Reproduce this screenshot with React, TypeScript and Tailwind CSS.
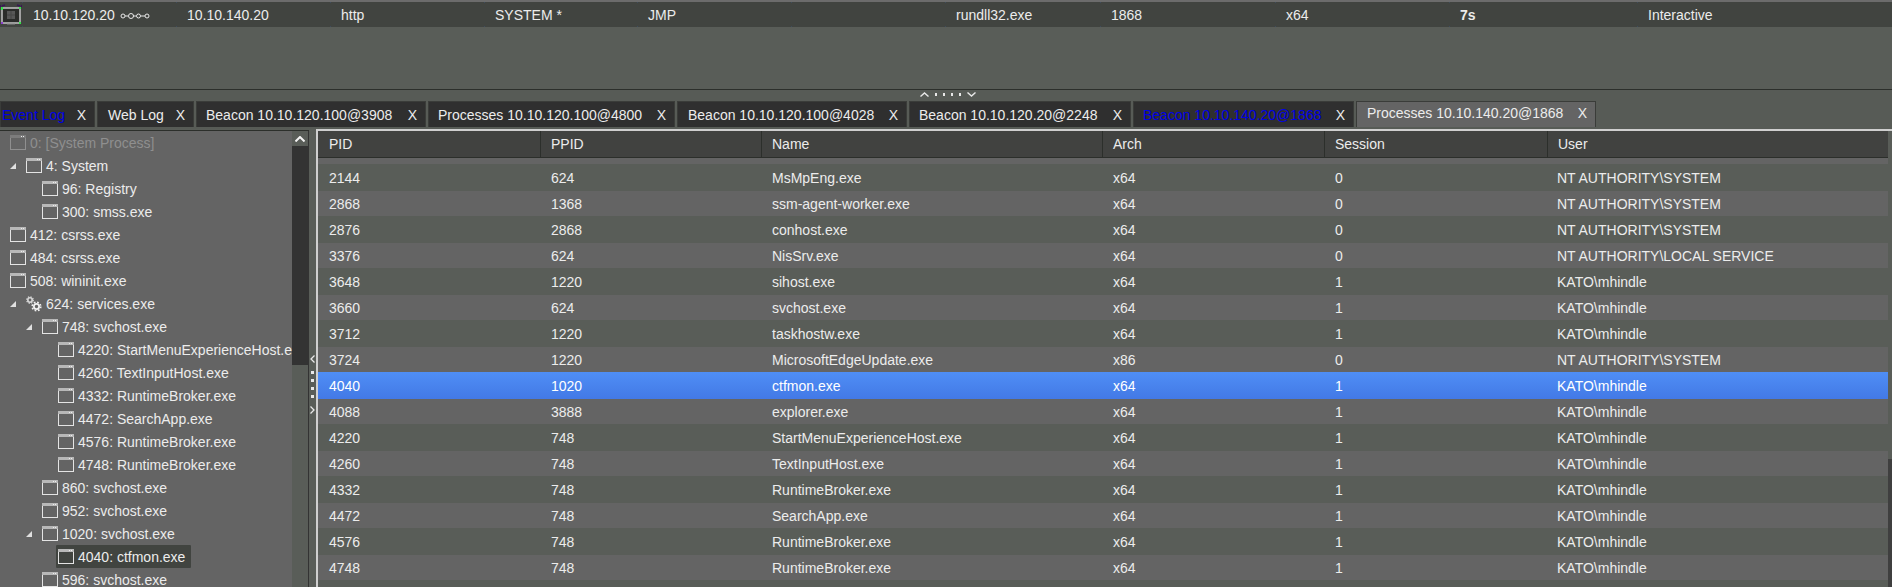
import React from "react";

const topCells: { w: string; text: string; bold?: boolean; pivot?: boolean }[] = [
  { w: "w-[154px]", text: "10.10.120.20", pivot: true },
  { w: "w-[154px]", text: "10.10.140.20" },
  { w: "w-[154px]", text: "http" },
  { w: "w-[153px]", text: "SYSTEM *" },
  { w: "w-[154px]", text: "JMP" },
  { w: "w-[154px]", text: "" },
  { w: "w-[155px]", text: "rundll32.exe" },
  { w: "w-[175px]", text: "1868" },
  { w: "w-[174px]", text: "x64" },
  { w: "w-[188px]", text: "7s", bold: true },
  { w: "w-[255px]", text: "Interactive" },
];

const tabs: { label: string; w: string; pad: string; blue?: boolean; active?: boolean }[] = [
  { label: "Event Log", w: "w-[95px]", pad: "pl-[1px]", blue: true },
  { label: "Web Log", w: "w-[97px]", pad: "pl-[10px]" },
  { label: "Beacon 10.10.120.100@3908", w: "w-[230px]", pad: "pl-[9px]" },
  { label: "Processes 10.10.120.100@4800", w: "w-[247px]", pad: "pl-[9px]" },
  { label: "Beacon 10.10.120.100@4028", w: "w-[230px]", pad: "pl-[10px]" },
  { label: "Beacon 10.10.120.20@2248", w: "w-[222px]", pad: "pl-[9px]" },
  { label: "Beacon 10.10.140.20@1868", w: "w-[221px]", pad: "pl-[9px]", blue: true },
  { label: "Processes 10.10.140.20@1868", w: "w-[240px]", pad: "pl-[10px]", active: true },
];

type Node = { t: string; l: 0 | 1 | 2 | 3; exp?: boolean; gear?: boolean; dim?: boolean; sel?: boolean };
const tree: Node[] = [
  { t: "0: [System Process]", l: 0, dim: true },
  { t: "4: System", l: 1, exp: true },
  { t: "96: Registry", l: 2 },
  { t: "300: smss.exe", l: 2 },
  { t: "412: csrss.exe", l: 0 },
  { t: "484: csrss.exe", l: 0 },
  { t: "508: wininit.exe", l: 0 },
  { t: "624: services.exe", l: 1, exp: true, gear: true },
  { t: "748: svchost.exe", l: 2, exp: true },
  { t: "4220: StartMenuExperienceHost.exe", l: 3 },
  { t: "4260: TextInputHost.exe", l: 3 },
  { t: "4332: RuntimeBroker.exe", l: 3 },
  { t: "4472: SearchApp.exe", l: 3 },
  { t: "4576: RuntimeBroker.exe", l: 3 },
  { t: "4748: RuntimeBroker.exe", l: 3 },
  { t: "860: svchost.exe", l: 2 },
  { t: "952: svchost.exe", l: 2 },
  { t: "1020: svchost.exe", l: 2, exp: true },
  { t: "4040: ctfmon.exe", l: 3, sel: true },
  { t: "596: svchost.exe", l: 2 },
];

const rows: string[][] = [
  ["2144", "624", "MsMpEng.exe", "x64", "0", "NT AUTHORITY\\SYSTEM"],
  ["2868", "1368", "ssm-agent-worker.exe", "x64", "0", "NT AUTHORITY\\SYSTEM"],
  ["2876", "2868", "conhost.exe", "x64", "0", "NT AUTHORITY\\SYSTEM"],
  ["3376", "624", "NisSrv.exe", "x64", "0", "NT AUTHORITY\\LOCAL SERVICE"],
  ["3648", "1220", "sihost.exe", "x64", "1", "KATO\\mhindle"],
  ["3660", "624", "svchost.exe", "x64", "1", "KATO\\mhindle"],
  ["3712", "1220", "taskhostw.exe", "x64", "1", "KATO\\mhindle"],
  ["3724", "1220", "MicrosoftEdgeUpdate.exe", "x86", "0", "NT AUTHORITY\\SYSTEM"],
  ["4040", "1020", "ctfmon.exe", "x64", "1", "KATO\\mhindle"],
  ["4088", "3888", "explorer.exe", "x64", "1", "KATO\\mhindle"],
  ["4220", "748", "StartMenuExperienceHost.exe", "x64", "1", "KATO\\mhindle"],
  ["4260", "748", "TextInputHost.exe", "x64", "1", "KATO\\mhindle"],
  ["4332", "748", "RuntimeBroker.exe", "x64", "1", "KATO\\mhindle"],
  ["4472", "748", "SearchApp.exe", "x64", "1", "KATO\\mhindle"],
  ["4576", "748", "RuntimeBroker.exe", "x64", "1", "KATO\\mhindle"],
  ["4748", "748", "RuntimeBroker.exe", "x64", "1", "KATO\\mhindle"],
  ["", "", "", "", "", ""],
];

const headers = ["PID", "PPID", "Name", "Arch", "Session", "User"];
const gridCols = "grid grid-cols-[222px_221px_341px_222px_223px_341px]";

function BeaconIcon() {
  return (
    <svg width="22" height="25" viewBox="0 0 22 25" className="shrink-0">
      <rect x="2" y="6" width="18" height="15" fill="#2b2c2a" stroke="#bcbcbc" strokeWidth="1.6" />
      <rect x="7" y="9" width="8" height="8" fill="#575757" />
      <path d="M11 9v8M7 13h8" stroke="#474747" />
      <path d="M7 22h8" stroke="#8a8a8a" />
      <path d="M1 5l-1-2M21 5l1-2M2 4l3-1M20 4l-3-1" stroke="#3a1656" strokeWidth="1.5" />
      <rect x="1" y="5" width="2" height="3" fill="#35e04a" />
      <rect x="19" y="5" width="2" height="2" fill="#35e04a" />
      <rect x="1" y="20" width="2" height="2" fill="#8d3fd0" />
      <rect x="19" y="20" width="2" height="2" fill="#35e04a" />
    </svg>
  );
}

function PivotIcon() {
  return (
    <svg width="30" height="8" viewBox="0 0 30 8" className="ml-[5px] mt-[2px] shrink-0" fill="none" stroke="#e8e8e8">
      <path d="M5 4h3M13 4h3M21 4h4" />
      <circle cx="3" cy="4" r="2" />
      <circle cx="11" cy="4" r="2.5" />
      <circle cx="18.5" cy="4" r="2" />
      <circle cx="27" cy="4" r="2" />
    </svg>
  );
}

function WindowIcon({ dim, sel }: { dim?: boolean; sel?: boolean }) {
  const line = dim ? "#8f8f8f" : "#e4e4e4";
  return (
    <svg width="16" height="15" viewBox="0 0 16 15" className="shrink-0">
      <rect x="0.5" y="0.5" width="15" height="14" fill={sel ? "#414440" : "none"} stroke={line} />
      <rect x="0" y="0" width="16" height="3" fill={dim ? "#7c7c7c" : "#b8b8b8"} />
      <rect x="11" y="1" width="1" height="1" fill="#eeeeee" />
      <rect x="13" y="1" width="1" height="1" fill="#eeeeee" />
    </svg>
  );
}

function GearIcon() {
  return (
    <svg width="16" height="16" viewBox="0 0 16 16" className="shrink-0" fill="none" stroke="#d8d8d8">
      <circle cx="4" cy="4" r="2.2" strokeWidth="1.6" />
      <circle cx="4" cy="4" r="3.3" strokeWidth="1.2" strokeDasharray="1.3 1.3" />
      <circle cx="10.5" cy="10.5" r="2.6" strokeWidth="1.8" stroke="#f0f0f0" />
      <circle cx="10.5" cy="10.5" r="4.3" strokeWidth="1.6" strokeDasharray="1.7 1.7" stroke="#f0f0f0" />
    </svg>
  );
}

function Expander() {
  return (
    <svg width="6" height="6" viewBox="0 0 6 6" className="shrink-0">
      <polygon points="6,0 6,6 0,6" fill="#e0e0e0" />
    </svg>
  );
}

function Chevron({ up }: { up?: boolean }) {
  return (
    <svg width="9" height="5" viewBox="0 0 9 5" className="shrink-0" fill="none" stroke="#e8e8e8" strokeWidth="1.4">
      <path d={up ? "M0.5 4.5L4.5 1l4 3.5" : "M0.5 0.5L4.5 4l4-3.5"} />
    </svg>
  );
}

const levelPad = ["pl-[10px]", "pl-[10px]", "pl-[26px]", "pl-[42px]"];

export default function App() {
  return (
    <div className="w-[1892px] h-[587px] overflow-hidden flex flex-col bg-[#595d58] text-[14px] text-[#ececec] font-['Liberation_Sans',Arial,sans-serif]">
      <div className="h-[2px] bg-[#6c6c6c]" />
      <div className="h-[25px] flex bg-[#414440]">
        <BeaconIcon />
        {topCells.map((c, i) => (
          <div key={i} className={`${c.w} flex shrink-0 items-center`}>
            <div className="w-px h-full flex flex-col justify-between shrink-0">
              <div className="h-px bg-[#3e4c5c]" />
              <div className="h-px bg-[#3e4c5c]" />
            </div>
            <span className={`pl-[10px] mt-[2px] ${c.bold ? "font-bold" : ""}`}>{c.text}</span>
            {c.pivot && <PivotIcon />}
          </div>
        ))}
      </div>
      <div className="h-[62px]" />
      <div className="h-px bg-[#2c2f2b]" />
      <div className="h-[11px] flex justify-center items-start gap-[3px] bg-[#575b56] pt-[2px] pl-[4px]">
        <Chevron up />
        <div className="flex gap-[6px] mx-[3px] mt-[1px]">
          <div className="w-[2px] h-[3px] bg-[#e8e8e8]" />
          <div className="w-[2px] h-[3px] bg-[#e8e8e8]" />
          <div className="w-[2px] h-[3px] bg-[#e8e8e8]" />
          <div className="w-[2px] h-[3px] bg-[#e8e8e8]" />
        </div>
        <Chevron />
      </div>
      <div className="h-[28px] flex gap-[2px] bg-[#575b56]">
        {tabs.map((t) => (
          <div
            key={t.label}
            className={`${t.w} h-[26px] flex items-center justify-between pr-[8px] shrink-0 border border-b-0 border-[#3a3c39] ${t.pad} ${
              t.active ? "bg-[#646464] pb-[3px]" : "bg-[#2f2f2f] pt-[2px]"
            } ${t.blue ? "text-[#0000e6]" : ""}`}
          >
            <span>{t.label}</span>
            <span className="text-[#ececec]">X</span>
          </div>
        ))}
      </div>
      <div className="flex-1 min-h-0 flex">
        <div className="w-[309px] shrink-0 flex flex-col pt-px">
          <div className="h-px bg-[#2c2f2b]" />
          <div className="flex-1 min-h-0 flex border-r border-[#333333]">
            <div className="w-[292px] shrink-0 bg-[#646464] overflow-hidden">
              {tree.map((n) => (
                <div key={n.t} className={`h-[23px] flex items-center whitespace-nowrap ${levelPad[n.l]}`}>
                  {n.l > 0 && (
                    <div className="w-[16px] shrink-0 flex items-center">{n.exp && <Expander />}</div>
                  )}
                  <div
                    className={`flex items-center h-[23px] ${
                      n.sel ? "bg-[#414440] rounded-[1px] -ml-[2px] pl-[2px] pr-[6px]" : ""
                    }`}
                  >
                    {n.gear ? <GearIcon /> : <WindowIcon dim={n.dim} sel={n.sel} />}
                    <span className={`ml-[4px] mt-[2px] ${n.dim ? "text-[#8f8f8f]" : ""}`}>{n.t}</span>
                  </div>
                </div>
              ))}
            </div>
            <div className="w-[16px] shrink-0 flex flex-col bg-[#595d58]">
              <div className="h-[15px] flex items-center justify-center">
                <svg width="10" height="6" viewBox="0 0 10 6" fill="none" stroke="#f2f2f2" strokeWidth="2">
                  <path d="M0.5 5.5L5 1l4.5 4.5" />
                </svg>
              </div>
              <div className="h-[219px] bg-[#333333]" />
            </div>
          </div>
        </div>
        <div className="w-[7px] shrink-0 flex flex-col items-center pt-[226px] gap-[5px] bg-[#595d58]">
          <svg width="5" height="8" viewBox="0 0 5 8" fill="none" stroke="#e8e8e8" strokeWidth="1.3">
            <path d="M4.5 0.5L1 4l3.5 3.5" />
          </svg>
          <div className="w-[3px] h-[3px] bg-[#e8e8e8] mt-[3px]" />
          <div className="w-[3px] h-[3px] bg-[#e8e8e8]" />
          <div className="w-[3px] h-[3px] bg-[#e8e8e8]" />
          <div className="w-[3px] h-[3px] bg-[#e8e8e8]" />
          <svg width="5" height="8" viewBox="0 0 5 8" fill="none" stroke="#e8e8e8" strokeWidth="1.3" className="mt-[3px]">
            <path d="M0.5 0.5L4 4L0.5 7.5" />
          </svg>
        </div>
        <div className="flex-1 min-w-0 flex flex-col border-t-2 border-l-2 border-[#cfcfcf]">
          <div className="flex-1 min-h-0 flex">
            <div className="w-[1570px] shrink-0 overflow-hidden bg-[#646464]">
              <div className={`${gridCols} h-[27px] bg-[#414240] border-b border-[#2c2f2b]`}>
                {headers.map((h, i) => (
                  <div
                    key={h}
                    className={`pl-[11px] flex items-center ${i > 0 ? "shadow-[inset_1px_0_0_#2c2f2b]" : ""}`}
                  >
                    {h}
                  </div>
                ))}
              </div>
              <div className="h-[6px]" />
              {rows.map((r, i) => (
                <div
                  key={i}
                  className={`${gridCols} ${i % 2 === 0 ? "h-[27px]" : "h-[25px]"} ${
                    i === 8
                      ? "bg-gradient-to-b from-[#4f8ef5] to-[#4379e6] text-white"
                      : i % 2 === 0
                        ? "bg-[#595d58]"
                        : "bg-[#646464]"
                  }`}
                >
                  {r.map((c, j) => (
                    <div key={j} className={`pt-[2px] flex items-center whitespace-nowrap ${j === 5 ? "pl-[10px]" : "pl-[11px]"}`}>
                      {c}
                    </div>
                  ))}
                </div>
              ))}
            </div>
            <div className="w-[4px] shrink-0 flex flex-col bg-[#595d58]">
              <div className="h-[328px]" />
              <div className="flex-1 bg-[#3f3f3f]" />
            </div>
          </div>
        </div>
      </div>
    </div>
  );
}
